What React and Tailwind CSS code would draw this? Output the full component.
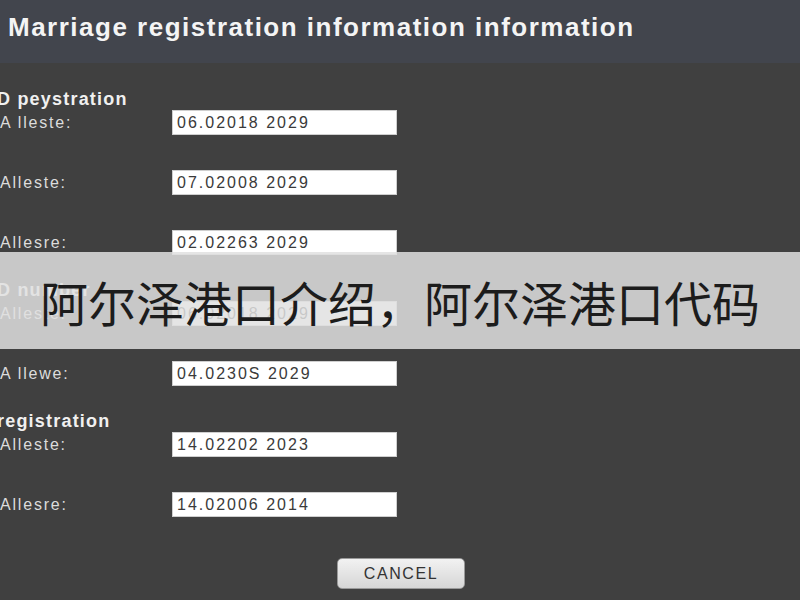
const groups = [
    {
        title: 'D peystration',
        rows: [
            { label: 'A lleste:', value: '06.02018 2029' },
            { label: 'Alleste:', value: '07.02008 2029' },
            { label: 'Allesre:', value: '02.02263 2029' },
        ],
    },
    {
        title: 'D number',
        rows: [
            { label: 'Alleste:', value: '06.02018 2029' },
            { label: 'A llewe:', value: '04.0230S 2029' },
        ],
    },
    {
        title: 'registration',
        rows: [
            { label: 'Alleste:', value: '14.02202 2023' },
            { label: 'Allesre:', value: '14.02006 2014' },
        ],
    },
];

const FormRow = ({ label, value }) => (
    <div className="flex items-center h-[25px]">
        <div className="w-[172px] text-[16px] tracking-[1.8px] text-[#dcdcdc]">
            {label}
        </div>
        <div className="w-[225px] h-[25px] bg-white border border-[#cfcfcf] flex items-center pl-[4px] text-[16px] tracking-[2px] text-[#3a3a3a]">
            {value}
        </div>
    </div>
);

const App = () => {
    return (
        <div
            className="relative w-[800px] h-[600px] overflow-hidden bg-[#404040]"
            style={{ fontFamily: '"Liberation Sans", Arial, sans-serif' }}
        >
            <div className="h-[63px] bg-[#42454d] flex items-center pl-[8px] pb-[9px]">
                <h1 className="text-[26px] tracking-[1.5px] text-[#f4f4f4] font-bold">
                    Marriage registration information information
                </h1>
            </div>

            <div className="pt-[26px] flex flex-col gap-[25px]">
                {groups.map(group => (
                    <div key={group.title} className="flex flex-col">
                        <div className="h-[20px] leading-[20px] -ml-[3px] text-[18px] tracking-[1.2px] font-bold text-[#f0f0f0] mb-[1px]">
                            {group.title}
                        </div>
                        <div className="flex flex-col gap-[35px]">
                            {group.rows.map((row, i) => (
                                <FormRow key={i} label={row.label} value={row.value} />
                            ))}
                        </div>
                    </div>
                ))}
            </div>

            <div className="flex justify-center pt-[41px] pl-[2px]">
                <button className="w-[128px] h-[31px] rounded-[5px] border border-[#9a9a9a] bg-gradient-to-b from-[#f2f2f2] to-[#d6d6d6] text-[16px] tracking-[1.6px] text-[#333]">
                    CANCEL
                </button>
            </div>

            <div className="absolute left-0 right-0 top-[252px] h-[97px] bg-[#e1e1e1]/85 flex items-center justify-center">
                <span
                    className="text-[48px] text-[#1c1c1c] leading-none"
                    style={{ fontFamily: '"Noto Sans CJK SC", "Noto Sans", sans-serif' }}
                >
                    阿尔泽港口介绍，阿尔泽港口代码
                </span>
            </div>
        </div>
    );
};

export default App;
